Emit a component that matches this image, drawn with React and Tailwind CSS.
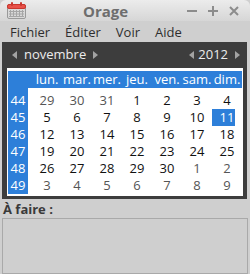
import React from 'react';

const weeks = [
  { n: 44, days: [[29, 0], [30, 0], [31, 0], [1, 1], [2, 1], [3, 1], [4, 1]] },
  { n: 45, days: [[5, 1], [6, 1], [7, 1], [8, 1], [9, 1], [10, 1], [11, 1]] },
  { n: 46, days: [[12, 1], [13, 1], [14, 1], [15, 1], [16, 1], [17, 1], [18, 1]] },
  { n: 47, days: [[19, 1], [20, 1], [21, 1], [22, 1], [23, 1], [24, 1], [25, 1]] },
  { n: 48, days: [[26, 1], [27, 1], [28, 1], [29, 1], [30, 1], [1, 0], [2, 0]] },
  { n: 49, days: [[3, 0], [4, 0], [5, 0], [6, 0], [7, 0], [8, 0], [9, 0]] },
];

const dayNames = ['lun.', 'mar.', 'mer.', 'jeu.', 'ven.', 'sam.', 'dim.'];

// little calendar icon of the title bar
const AppIcon = () => (
  <svg width="19" height="17" viewBox="0 0 19 17">
    <rect x="0.5" y="2.5" width="18" height="14" rx="1.5" fill="#d9d9d9" stroke="#9a9a9a" />
    <rect x="0.5" y="2.5" width="18" height="4" rx="1.5" fill="#e8524a" stroke="#c9382f" />
    <rect x="4" y="0" width="2" height="4" rx="1" fill="#c9382f" />
    <rect x="13" y="0" width="2" height="4" rx="1" fill="#c9382f" />
    {[3, 6, 9, 12, 15].map(x => (
      <line key={x} x1={x + 0.5} y1="8" x2={x + 0.5} y2="15" stroke="#a6a6a6" />
    ))}
    {[9, 11.5, 14].map(y => (
      <line key={y} x1="2" y1={y + 0.5} x2="17" y2={y + 0.5} stroke="#a6a6a6" />
    ))}
  </svg>
);

const Arrow = ({ dir }) => (
  <svg width="5" height="8" viewBox="0 0 5 8" className="shrink-0">
    <path d={dir === 'l' ? 'M5 0 L0 4 L5 8 Z' : 'M0 0 L5 4 L0 8 Z'} fill="#a3a3a3" />
  </svg>
);

const WinButtons = () => (
  <div className="ml-auto flex items-center gap-[11px]">
    <svg width="10" height="10" viewBox="0 0 10 10">
      <path d="M0 5 H10" stroke="#8c8c8c" strokeWidth="2" />
    </svg>
    <svg width="10" height="10" viewBox="0 0 10 10">
      <path d="M0 5 H10 M5 0 V10" stroke="#8c8c8c" strokeWidth="2" />
    </svg>
    <svg width="10" height="10" viewBox="0 0 10 10">
      <path d="M1 1 L9 9 M9 1 L1 9" stroke="#8c8c8c" strokeWidth="2" />
    </svg>
  </div>
);

export default function App() {
  return (
    <div className="w-[250px] h-[274px] bg-[#cfcfcf] font-['Open_Sans',sans-serif] overflow-hidden flex flex-col">
      {/* title bar */}
      <div className="h-[21px] rounded-t-[6px] bg-gradient-to-b from-[#ececec] to-[#d6d6d6] flex items-center pl-[7px] pr-[11px] relative">
        <AppIcon />
        <div className="absolute left-[83px] top-[1px] text-[15px] font-bold text-[#6e6e6e] leading-[20px]">Orage</div>
        <WinButtons />
      </div>

      {/* menu bar */}
      <div className="h-[21px] flex items-center pl-[10px] gap-[15px] text-[13px] text-[#2e2e2e] pt-[2px]">
        <span>Fichier</span>
        <span>Éditer</span>
        <span>Voir</span>
        <span>Aide</span>
      </div>

      {/* calendar */}
      <div className="ml-[2px] w-[245px] bg-[#3d3d3d] flex flex-col">
        <div className="h-[26px] flex items-center text-[13px] text-[#ececec] pl-[10px] pr-[7px]">
          <Arrow dir="l" />
          <span className="ml-[7px] mr-[7px]">novembre</span>
          <Arrow dir="r" />
          <span className="ml-auto" />
          <Arrow dir="l" />
          <span className="ml-[4px] mr-[7px]">2012</span>
          <Arrow dir="r" />
        </div>
        <div className="ml-[5px] mr-[4px] mb-[3px] bg-white pt-[3px] pl-[1px] pr-[1px] pb-[2px] flex text-[13px]">
          <div className="w-[20px] bg-[#2d7fd9] text-white flex flex-col">
            <div className="h-[21px]" />
            {weeks.map(w => (
              <div key={w.n} className="h-[17px] leading-[17px] text-center">{w.n}</div>
            ))}
          </div>
          <div className="flex-1 flex flex-col">
            <div className="h-[17px] bg-[#2d7fd9] text-white flex pl-[4px] leading-[17px]">
              {dayNames.map(d => (
                <div key={d} className="w-[30px] text-center">{d}</div>
              ))}
            </div>
            <div className="mt-[4px] flex flex-col pl-[4px]">
              {weeks.map(w => (
                <div key={w.n} className="h-[17px] flex">
                  {w.days.map(([d, cur], i) => {
                    const sel = w.n === 45 && d === 11;
                    return (
                      <div key={i} className={`w-[30px] relative text-center leading-[17px] ${cur ? 'text-[#111]' : 'text-[#555]'}`}>
                        {sel && <span className="absolute left-0 top-0 w-[23px] h-[17px] bg-[#2d7fd9]" />}
                        <span className={`relative ${sel ? 'text-white' : ''}`}>{d}</span>
                      </div>
                    );
                  })}
                </div>
              ))}
            </div>
          </div>
        </div>
      </div>

      {/* to-do */}
      <div className="pl-[3px] mt-[3px] text-[13px] font-bold text-[#3a3a3a] leading-[15px]">À faire :</div>
      <div className="mx-[2px] mt-[1px] flex-1 border border-[#a9a9a9] bg-[#cfcfcf]" />
    </div>
  );
}
